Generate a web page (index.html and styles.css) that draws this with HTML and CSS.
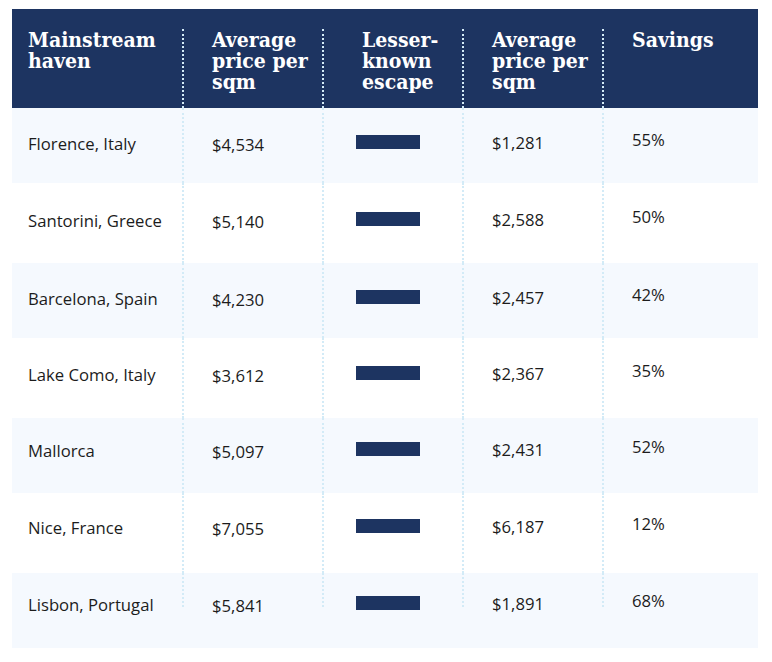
FILE: index.html
```html
<!DOCTYPE html>
<html lang="en">
<head>
<meta charset="utf-8">
<title>Mainstream havens vs lesser-known escapes</title>
<link rel="stylesheet" href="styles.css">
</head>
<body>
<div class="page">
  <div class="table">
    <div class="row head">
      <div class="cell c1">Mainstream haven</div>
      <div class="cell c2">Average price per sqm</div>
      <div class="cell c3">Lesser-known escape</div>
      <div class="cell c4">Average price per sqm</div>
      <div class="cell c5">Savings</div>
    </div>
    <div class="row odd">
      <div class="cell c1">Florence, Italy</div>
      <div class="cell c2">$4,534</div>
      <div class="cell c3"><span class="bar"></span></div>
      <div class="cell c4">$1,281</div>
      <div class="cell c5">55%</div>
    </div>
    <div class="row even">
      <div class="cell c1">Santorini, Greece</div>
      <div class="cell c2">$5,140</div>
      <div class="cell c3"><span class="bar"></span></div>
      <div class="cell c4">$2,588</div>
      <div class="cell c5">50%</div>
    </div>
    <div class="row odd">
      <div class="cell c1">Barcelona, Spain</div>
      <div class="cell c2">$4,230</div>
      <div class="cell c3"><span class="bar"></span></div>
      <div class="cell c4">$2,457</div>
      <div class="cell c5">42%</div>
    </div>
    <div class="row even up1">
      <div class="cell c1">Lake Como, Italy</div>
      <div class="cell c2">$3,612</div>
      <div class="cell c3"><span class="bar"></span></div>
      <div class="cell c4">$2,367</div>
      <div class="cell c5">35%</div>
    </div>
    <div class="row odd up3">
      <div class="cell c1">Mallorca</div>
      <div class="cell c2">$5,097</div>
      <div class="cell c3"><span class="bar"></span></div>
      <div class="cell c4">$2,431</div>
      <div class="cell c5">52%</div>
    </div>
    <div class="row even up3">
      <div class="cell c1">Nice, France</div>
      <div class="cell c2">$7,055</div>
      <div class="cell c3"><span class="bar"></span></div>
      <div class="cell c4">$6,187</div>
      <div class="cell c5">12%</div>
    </div>
    <div class="row odd up4 last">
      <div class="cell c1">Lisbon, Portugal</div>
      <div class="cell c2">$5,841</div>
      <div class="cell c3"><span class="bar"></span></div>
      <div class="cell c4">$1,891</div>
      <div class="cell c5">68%</div>
    </div>
  </div>
</div>
</body>
</html>
```
FILE: styles.css
```css
html, body {
  margin: 0;
  padding: 0;
  background: #ffffff;
}

.page {
  padding: 9px 14px 0 12px;
}

.table {
  width: 746px;
  font-family: "Open Sans", "Noto Sans", sans-serif;
  font-size: 16.7px;
  color: #1c1c1c;
}

.row {
  display: grid;
  grid-template-columns: 170px 140px 140px 140px 156px;
  box-sizing: border-box;
  --base: 24px;
  --shift: 0px;
}

.cell {
  line-height: 24px;
  --col: 0px;
  padding: calc(var(--base) + var(--col) - var(--shift)) 12px 0 28px;
  border-left: 2px dotted #d3ebf7;
}

.cell.c1 {
  border-left: none;
  padding-left: 16px;
}

.cell.c3 { padding-left: 32px; }
.cell.c2 { --col: 1px; }
.cell.c4 { --col: -1px; }
.cell.c5 { --col: -4px; }

.up1 { --shift: 1px; }
.up3 { --shift: 3px; }
.up4 { --shift: 4px; }

.head {
  background: #1d3461;
  padding-top: 20px;
  height: 99px;
}

.head .cell {
  font-family: "DejaVu Serif", "Liberation Serif", serif;
  font-stretch: condensed;
  font-weight: bold;
  font-size: 21px;
  line-height: 21px;
  color: #ffffff;
  padding: 0 4px 0 28px;
}

.head .cell.c1 { padding-left: 16px; }
.head .cell.c3 { padding-left: 38px; }

.odd {
  background: #f5f9fe;
  height: 75px;
}

.even {
  background: #ffffff;
  height: 80px;
  --base: 26px;
}

.bar {
  display: block;
  width: 64px;
  height: 14px;
  margin-top: 3px;
  background: #1d3461;
}

.last .cell {
  border-left: 2px solid transparent;
  background: repeating-linear-gradient(to bottom, #d3ebf7 0 2px, transparent 2px 4px) left top / 2px 36px no-repeat;
  background-origin: border-box;
}

.last .cell.c1 {
  border-left: none;
  background: none;
}
```
